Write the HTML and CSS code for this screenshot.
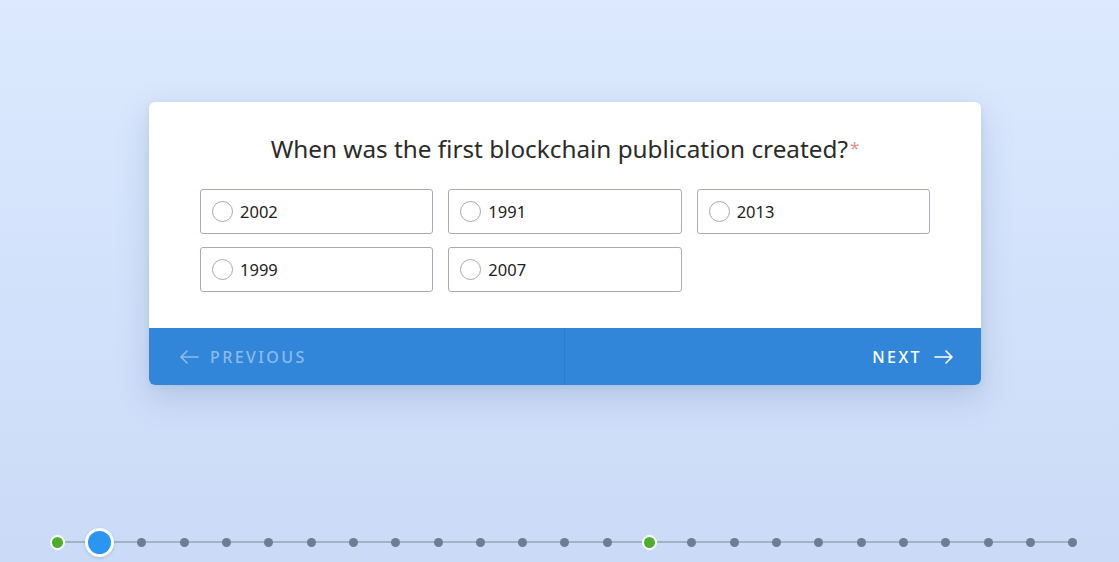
FILE: index.html
```html
<!DOCTYPE html>
<html>
<head>
<meta charset="utf-8">
<link rel="stylesheet" href="styles.css">
</head>
<body>
<div class="page">
  <div class="card">
    <div class="body">
      <h1 class="title">When was the first blockchain publication created?<span class="req">*</span></h1>
      <div class="options">
        <label class="opt"><span class="radio"></span><span class="lbl">2002</span></label>
        <label class="opt"><span class="radio"></span><span class="lbl">1991</span></label>
        <label class="opt"><span class="radio"></span><span class="lbl">2013</span></label>
        <label class="opt"><span class="radio"></span><span class="lbl">1999</span></label>
        <label class="opt"><span class="radio"></span><span class="lbl">2007</span></label>
      </div>
    </div>
    <div class="footer">
      <div class="btn prev">
        <svg width="20" height="14" viewBox="0 0 20 14"><path d="M19 7H2M8 1L2 7l6 6" fill="none" stroke="currentColor" stroke-width="1.6" stroke-linecap="round" stroke-linejoin="round"/></svg>
        <span>PREVIOUS</span>
      </div>
      <div class="btn next">
        <span>NEXT</span>
        <svg width="20" height="14" viewBox="0 0 20 14"><path d="M1 7h17M12 1l6 6-6 6" fill="none" stroke="currentColor" stroke-width="1.6" stroke-linecap="round" stroke-linejoin="round"/></svg>
      </div>
    </div>
  </div>
  <div class="progress">
    <span class="cell"><span class="dot done"></span></span>
    <span class="cell"><span class="dot current"></span></span>
    <span class="cell"><span class="dot"></span></span>
    <span class="cell"><span class="dot"></span></span>
    <span class="cell"><span class="dot"></span></span>
    <span class="cell"><span class="dot"></span></span>
    <span class="cell"><span class="dot"></span></span>
    <span class="cell"><span class="dot"></span></span>
    <span class="cell"><span class="dot"></span></span>
    <span class="cell"><span class="dot"></span></span>
    <span class="cell"><span class="dot"></span></span>
    <span class="cell"><span class="dot"></span></span>
    <span class="cell"><span class="dot"></span></span>
    <span class="cell"><span class="dot"></span></span>
    <span class="cell"><span class="dot done"></span></span>
    <span class="cell"><span class="dot"></span></span>
    <span class="cell"><span class="dot"></span></span>
    <span class="cell"><span class="dot"></span></span>
    <span class="cell"><span class="dot"></span></span>
    <span class="cell"><span class="dot"></span></span>
    <span class="cell"><span class="dot"></span></span>
    <span class="cell"><span class="dot"></span></span>
    <span class="cell"><span class="dot"></span></span>
    <span class="cell"><span class="dot"></span></span>
    <span class="cell"><span class="dot"></span></span>
  </div>
</div>
</body>
</html>
```
FILE: styles.css
```css
* { box-sizing: border-box; }
html, body { margin: 0; padding: 0; }
body {
  width: 1119px;
  height: 562px;
  overflow: hidden;
  background: linear-gradient(180deg, #dce9fe 0%, #d3e2fb 50%, #cadbf7 100%);
  font-family: "Noto Sans", "Open Sans", sans-serif;
}
.page {
  display: flex;
  flex-direction: column;
  align-items: flex-start;
  padding-top: 102px;
  height: 562px;
}
.card {
  width: 832px;
  margin-left: 149px;
  background: #fff;
  border-radius: 6px;
  box-shadow: 0 12px 32px rgba(70, 100, 150, 0.22), 0 2px 6px rgba(70, 100, 150, 0.08);
  overflow: hidden;
}
.body {
  padding: 31px 51px 36px;
}
.title {
  margin: 0;
  font-family: "Noto Sans", sans-serif;
  font-weight: 400;
  font-size: 24.3px;
  line-height: 30px;
  color: #2b2b2b;
  text-align: center;
  letter-spacing: 0;
}
.req {
  color: #e58a8a;
  font-size: 17px;
  vertical-align: 4px;
  margin-left: 2px;
}
.options {
  margin-top: 25px;
  display: grid;
  grid-template-columns: repeat(3, 1fr);
  column-gap: 15px;
  row-gap: 13px;
}
.opt {
  height: 45px;
  border: 1px solid #a9a9ba;
  border-radius: 3px;
  display: flex;
  align-items: center;
  padding-left: 11px;
}
.radio {
  width: 21px;
  height: 21px;
  border: 1px solid #a8a8a8;
  border-radius: 50%;
  background: #fff;
  flex: none;
}
.lbl {
  margin-left: 7px;
  font-size: 16.5px;
  color: #222;
}
.footer {
  height: 57px;
  background: #3186d9;
  display: grid;
  grid-template-columns: 1fr 1fr;
}
.btn {
  display: flex;
  align-items: center;
  font-size: 16px;
  letter-spacing: 2.4px;
  font-weight: 500;
}
.btn svg { flex: none; }
.prev {
  color: rgba(255, 255, 255, 0.45);
  padding-left: 30px;
  gap: 11px;
  border-right: 1px solid #2c7dcd;
}
.next {
  color: #fff;
  justify-content: flex-end;
  padding-right: 27px;
  gap: 12px;
}
.progress {
  margin-top: auto;
  margin-bottom: 6px;
  width: 1058px;
  margin-left: 36px;
  display: grid;
  grid-template-columns: repeat(25, 1fr);
  position: relative;
  height: 28px;
}
.progress::before {
  content: "";
  position: absolute;
  left: 21px;
  right: 21px;
  top: 13px;
  height: 2px;
  background: #a3b3c6;
}
.cell {
  display: flex;
  align-items: center;
  justify-content: center;
  position: relative;
}
.dot {
  width: 9px;
  height: 9px;
  border-radius: 50%;
  background: #6d7d92;
}
.dot.done {
  width: 15px;
  height: 15px;
  background: #4caf2a;
  border: 2px solid #fff;
}
.dot.current {
  width: 29px;
  height: 29px;
  background: #2b95f2;
  border: 3px solid #fff;
  box-shadow: 0 1px 3px rgba(60, 80, 120, 0.25);
}
```
